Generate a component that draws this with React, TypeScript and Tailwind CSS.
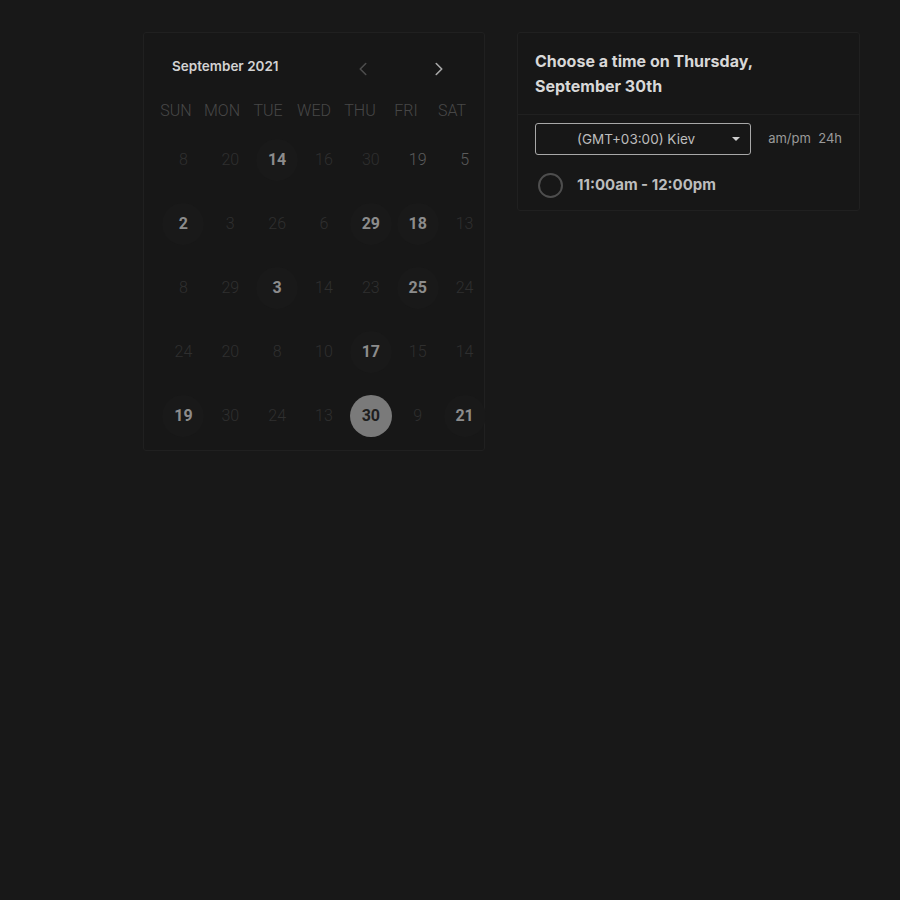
import { ChevronLeft, ChevronRight } from 'lucide-react';

type Day = { n: number; kind: 'dim' | 'mid' | 'on' | 'sel' };

const weekdays = ['SUN', 'MON', 'TUE', 'WED', 'THU', 'FRI', 'SAT'];

const rows: Day[][] = [
  [{ n: 8, kind: 'dim' }, { n: 20, kind: 'dim' }, { n: 14, kind: 'on' }, { n: 16, kind: 'dim' }, { n: 30, kind: 'dim' }, { n: 19, kind: 'mid' }, { n: 5, kind: 'mid' }],
  [{ n: 2, kind: 'on' }, { n: 3, kind: 'dim' }, { n: 26, kind: 'dim' }, { n: 6, kind: 'dim' }, { n: 29, kind: 'on' }, { n: 18, kind: 'on' }, { n: 13, kind: 'dim' }],
  [{ n: 8, kind: 'dim' }, { n: 29, kind: 'dim' }, { n: 3, kind: 'on' }, { n: 14, kind: 'dim' }, { n: 23, kind: 'dim' }, { n: 25, kind: 'on' }, { n: 24, kind: 'dim' }],
  [{ n: 24, kind: 'dim' }, { n: 20, kind: 'dim' }, { n: 8, kind: 'dim' }, { n: 10, kind: 'dim' }, { n: 17, kind: 'on' }, { n: 15, kind: 'dim' }, { n: 14, kind: 'dim' }],
  [{ n: 19, kind: 'on' }, { n: 30, kind: 'dim' }, { n: 24, kind: 'dim' }, { n: 13, kind: 'dim' }, { n: 30, kind: 'sel' }, { n: 9, kind: 'dim' }, { n: 21, kind: 'on' }],
];

function DayCell({ day }: { day: Day }) {
  if (day.kind === 'sel') {
    return (
      <div className="flex h-[42px] w-[42px] items-center justify-center rounded-full bg-[#7a7a7a] text-[16px] font-bold text-[#1e1e1e]">
        {day.n}
      </div>
    );
  }
  if (day.kind === 'on') {
    return (
      <div className="flex h-[42px] w-[42px] items-center justify-center rounded-full bg-[#191919] text-[16px] font-bold text-[#8c8c8c]">
        {day.n}
      </div>
    );
  }
  return (
    <div
      className={
        day.kind === 'mid'
          ? 'flex h-[42px] w-[42px] items-center justify-center text-[16px] font-light text-[#5c5c5c]'
          : 'flex h-[42px] w-[42px] items-center justify-center text-[16px] font-light text-[#2f2f2f]'
      }
    >
      {day.n}
    </div>
  );
}

export default function App() {
  return (
    <div className="min-h-[900px] w-full bg-[#181818] font-['Inter',sans-serif]">
      <div className="flex items-start gap-[32px] pl-[143px] pt-[32px]">
        {/* calendar */}
        <div className="h-[419px] w-[342px] rounded-[3px] border border-[#202020] bg-[#171717]">
          <div className="flex h-[64px] items-center pl-[28px] pt-[2px]">
            <span className="w-[178px] text-[13.5px] font-semibold text-[#d2d2d2]">September 2021</span>
            <ChevronLeft className="ml-[2px] mt-[5px] h-[22px] w-[22px] text-[#4c4c4c]" strokeWidth={1.75} />
            <ChevronRight className="ml-[54px] mt-[5px] h-[22px] w-[22px] text-[#a8a8a8]" strokeWidth={1.75} />
          </div>
          <div className="grid grid-cols-7 pl-[9px] pr-[9px] font-['Roboto',sans-serif] text-[16px] font-light text-[#474747]">
            {weekdays.map((w) => (
              <div key={w} className="flex h-[28px] items-center justify-center">
                {w}
              </div>
            ))}
          </div>
          <div className="mt-[3px] w-[328px] pl-[16px] font-['Roboto',sans-serif]">
            {rows.map((r, i) => (
              <div key={i} className="grid h-[64px] w-[328px] grid-cols-7 items-center">
                {r.map((d, j) => (
                  <div key={j} className="flex justify-center">
                    <DayCell day={d} />
                  </div>
                ))}
              </div>
            ))}
          </div>
        </div>

        {/* time picker */}
        <div className="w-[343px] rounded-[3px] border border-[#202020] bg-[#171717]">
          <div className="border-b border-[#202020] px-[17px] pb-[15px] pt-[16px] text-[16px] font-bold leading-[25px] text-[#d8d8d8]">
            Choose a time on Thursday,
            <br />
            September 30th
          </div>
          <div className="flex items-center px-[17px] pt-[8px]">
            <div className="relative flex h-[32px] w-[218px] items-center justify-center rounded-[3px] border border-[#a8a8a8] text-[13.5px] text-[#bdbdbd]">
              <span className="mr-[14px]">(GMT+03:00) Kiev</span>
              <span className="absolute right-[10px] top-[13px] h-0 w-0 border-l-[4px] border-r-[4px] border-t-[4px] border-l-transparent border-r-transparent border-t-[#cfcfcf]" />
            </div>
            <span className="ml-[17px] text-[13px] text-[#9a9a9a]">am/pm&nbsp;&nbsp;24h</span>
          </div>
          <div className="flex items-center px-[20px] pb-[12px] pt-[18px]">
            <span className="h-[25px] w-[25px] rounded-full border-2 border-[#4e4e4e]" />
            <span className="ml-[14px] text-[15px] font-bold text-[#bdbdbd]">11:00am - 12:00pm</span>
          </div>
        </div>
      </div>
    </div>
  );
}
